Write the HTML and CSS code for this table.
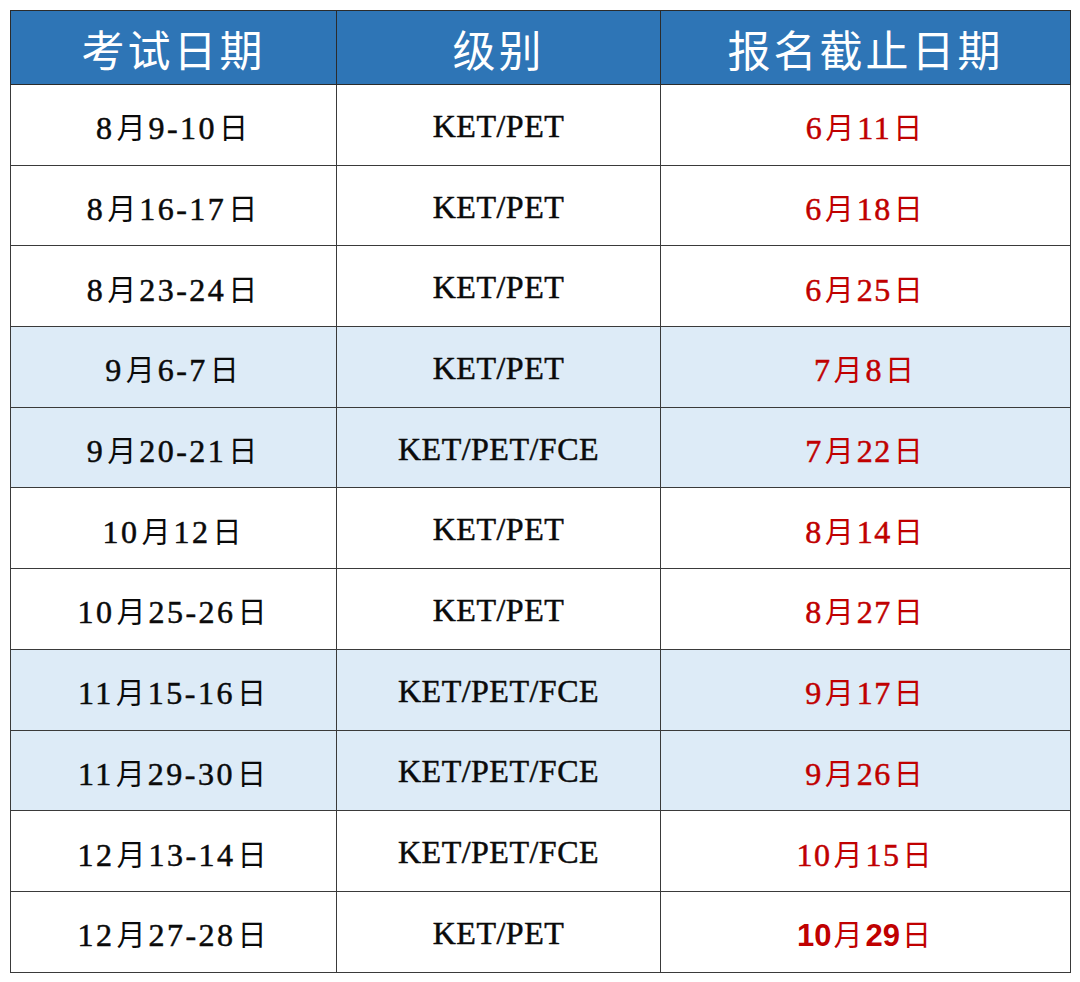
FILE: index.html
```html
<!DOCTYPE html>
<html lang="zh-CN">
<head>
<meta charset="utf-8">
<title>考试日期</title>
<link rel="stylesheet" href="styles.css">
</head>
<body>
<table class="sched">
  <colgroup><col class="c1"><col class="c2"><col class="c3"></colgroup>
  <thead>
    <tr><th>考试日期</th><th>级别</th><th>报名截止日期</th></tr>
  </thead>
  <tbody>
    <tr><td class="ex">8<span class="cj">月</span>9-10<span class="cj">日</span></td><td class="lv">KET/PET</td><td class="dl">6<span class="cj">月</span>11<span class="cj">日</span></td></tr>
    <tr><td class="ex">8<span class="cj">月</span>16-17<span class="cj">日</span></td><td class="lv">KET/PET</td><td class="dl">6<span class="cj">月</span>18<span class="cj">日</span></td></tr>
    <tr><td class="ex">8<span class="cj">月</span>23-24<span class="cj">日</span></td><td class="lv">KET/PET</td><td class="dl">6<span class="cj">月</span>25<span class="cj">日</span></td></tr>
    <tr class="hl"><td class="ex">9<span class="cj">月</span>6-7<span class="cj">日</span></td><td class="lv">KET/PET</td><td class="dl">7<span class="cj">月</span>8<span class="cj">日</span></td></tr>
    <tr class="hl"><td class="ex">9<span class="cj">月</span>20-21<span class="cj">日</span></td><td class="lv">KET/PET/FCE</td><td class="dl">7<span class="cj">月</span>22<span class="cj">日</span></td></tr>
    <tr><td class="ex">10<span class="cj">月</span>12<span class="cj">日</span></td><td class="lv">KET/PET</td><td class="dl">8<span class="cj">月</span>14<span class="cj">日</span></td></tr>
    <tr><td class="ex">10<span class="cj">月</span>25-26<span class="cj">日</span></td><td class="lv">KET/PET</td><td class="dl">8<span class="cj">月</span>27<span class="cj">日</span></td></tr>
    <tr class="hl"><td class="ex">11<span class="cj">月</span>15-16<span class="cj">日</span></td><td class="lv">KET/PET/FCE</td><td class="dl">9<span class="cj">月</span>17<span class="cj">日</span></td></tr>
    <tr class="hl"><td class="ex">11<span class="cj">月</span>29-30<span class="cj">日</span></td><td class="lv">KET/PET/FCE</td><td class="dl">9<span class="cj">月</span>26<span class="cj">日</span></td></tr>
    <tr><td class="ex">12<span class="cj">月</span>13-14<span class="cj">日</span></td><td class="lv">KET/PET/FCE</td><td class="dl">10<span class="cj">月</span>15<span class="cj">日</span></td></tr>
    <tr><td class="ex">12<span class="cj">月</span>27-28<span class="cj">日</span></td><td class="lv">KET/PET</td><td class="dl strong">10<span class="cj">月</span>29<span class="cj">日</span></td></tr>
  </tbody>
</table>
</body>
</html>
```

FILE: styles.css
```css
html, body {
  margin: 0;
  padding: 0;
  background: #ffffff;
}

body {
  padding: 10px 10px 0 10px;
}

.sched {
  width: 1060px;
  border-collapse: collapse;
  table-layout: fixed;
  border: 1.5px solid #5a5a5a;
}

.c1 { width: 326px; }
.c2 { width: 324px; }
.c3 { width: 410px; }

.sched th {
  height: 73px;
  padding: 0;
  background: #2e75b6;
  color: #ffffff;
  font-family: "Noto Sans CJK SC", "Noto Sans", sans-serif;
  font-weight: 400;
  font-size: 43px;
  letter-spacing: 3px;
  text-align: center;
  vertical-align: middle;
  border: 1px solid #2b2b2b;
}

.sched td {
  height: 80.7px;
  padding: 3px 0 0 0;
  box-sizing: border-box;
  text-align: center;
  vertical-align: middle;
  font-family: "Liberation Serif", "Noto Sans CJK SC", serif;
  font-weight: 400;
  font-size: 32px;
  letter-spacing: 1.5px;
  color: #0a0a0a;
  -webkit-text-stroke: 0.5px currentColor;
  border: 1px solid #3a3a3a;
}

.sched tr.hl td {
  background: #ddebf7;
}

.sched td.ex {
  letter-spacing: 2.5px;
}

.sched td.lv {
  letter-spacing: 0.5px;
}

.sched td.dl {
  color: #c00000;
}

.sched td.strong {
  font-family: "Liberation Sans", "Noto Sans CJK SC", sans-serif;
  font-weight: 700;
  font-size: 31px;
  letter-spacing: 0;
  -webkit-text-stroke: 0;
}

.cj {
  font-family: "Noto Sans CJK SC", sans-serif;
  font-weight: 400;
  font-size: 29px;
  letter-spacing: 0;
  margin: 0 3px 0 2px;
  -webkit-text-stroke: 0;
}
```
